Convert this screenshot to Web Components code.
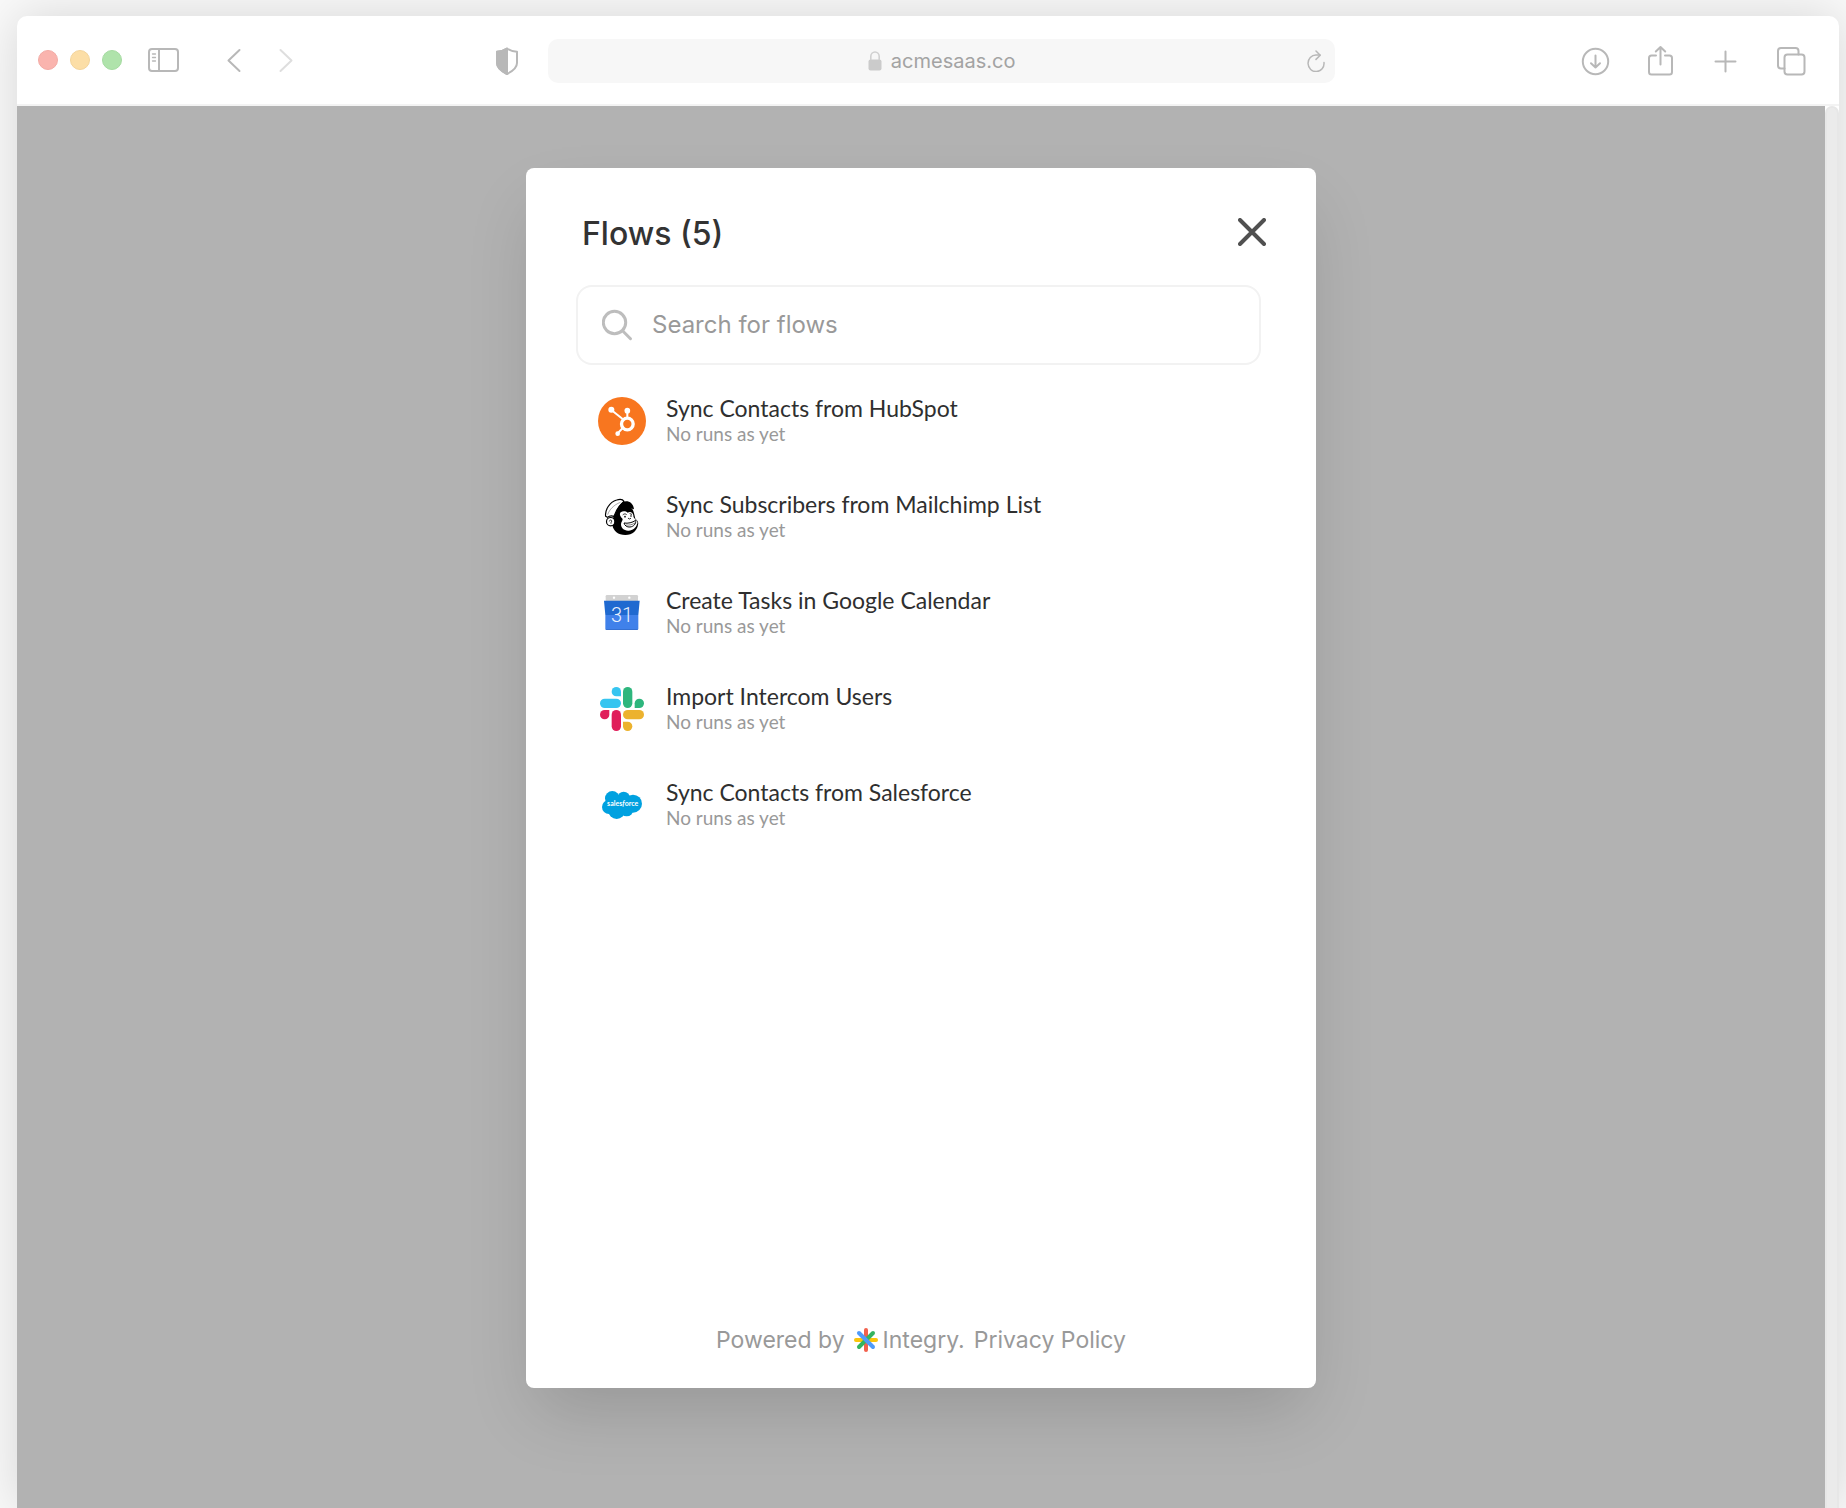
<!DOCTYPE html>
<html lang="en">
<head>
<meta charset="utf-8">
<meta name="viewport" content="width=device-width, initial-scale=1">
<title>Flows</title>
<style>
  html, body { margin: 0; }
  body { background: #f9f9f9; font-family: Inter, "Liberation Sans", sans-serif; color: #333; }
</style>
</head>
<body>
<browser-window>
  <browser-toolbar slot="toolbar" address="acmesaas.co"></browser-toolbar>
  <flows-dialog>
    <span slot="title">Flows (5)</span>
    <flow-search slot="search" placeholder="Search for flows"></flow-search>
    <flow-item brand="hubspot">Sync Contacts from HubSpot<span slot="status">No runs as yet</span></flow-item>
    <flow-item brand="mailchimp">Sync Subscribers from Mailchimp List<span slot="status">No runs as yet</span></flow-item>
    <flow-item brand="calendar">Create Tasks in Google Calendar<span slot="status">No runs as yet</span></flow-item>
    <flow-item brand="slack">Import Intercom Users<span slot="status">No runs as yet</span></flow-item>
    <flow-item brand="salesforce">Sync Contacts from Salesforce<span slot="status">No runs as yet</span></flow-item>
    <powered-by slot="footer"></powered-by>
  </flows-dialog>
</browser-window>

<script>
const RESET = `
  * { box-sizing: border-box; }
  button { appearance: none; border: 0; padding: 0; margin: 0; background: none; font: inherit; color: inherit; cursor: pointer; display: block; }
  svg { display: block; }
`;

class BaseElement extends HTMLElement {
  connectedCallback() {
    if (this.shadowRoot) return;
    this.attachShadow({ mode: 'open' }).innerHTML = `<style>${RESET}${this.styles()}</style>${this.markup()}`;
  }
}

customElements.define('browser-window', class extends BaseElement {
  styles() { return `
    :host { display: flex; flex-direction: column; min-height: 100vh; padding: 16px 7px 0 17px; box-sizing: border-box; overflow: hidden; }
    .frame { flex: 1; display: flex; flex-direction: column; background: #fff; border-radius: 10px 10px 0 0; box-shadow: 0 0 50px rgba(0,0,0,.14); }
    .view { flex: 1; display: flex; }
    .page { flex: 1; display: flex; justify-content: center; padding: 62px 24px 120px; background: #b2b2b2; }
    .scroll { width: 14px; background: #ebebeb; border: 2px solid #e7e7e7; border-bottom: 0; border-radius: 7px 7px 0 0; }
  `; }
  markup() { return `
    <div class="frame">
      <slot name="toolbar"></slot>
      <div class="view"><main class="page"><slot></slot></main><div class="scroll"></div></div>
    </div>`; }
});

customElements.define('browser-toolbar', class extends BaseElement {
  styles() { return `
    :host { display: grid; grid-template-columns: 13fr minmax(0, 787px) 12fr; align-items: center; height: 90px; padding: 2px 32px 0 20px; border-bottom: 2px solid #f3f3f3; box-sizing: border-box; }
    .left, .dots, .right, .nav { display: flex; align-items: center; }
    .left { padding-bottom: 2px; }
    .dots { gap: 10px; margin-right: 25px; }
    .nav { gap: 20px; margin-left: 38px; }
    button.shield { margin-left: auto; margin-right: 25px; }
    .right { gap: 33px; justify-content: flex-end; }
    .bar { display: grid; grid-template-columns: 1fr auto 1fr; align-items: center; height: 44px; padding: 0 10px; border-radius: 10px; background: #f7f7f7; }
    label { grid-column: 2; display: flex; align-items: center; gap: 9px; }
    input { field-sizing: content; border: 0; padding: 0; margin: 0; outline: 0; background: none; font: 400 20px/28px Inter, "Liberation Sans", sans-serif; color: #a3a3a3; }
    .reload { justify-self: end; }
    .icon { fill: none; stroke: #b8b8b8; stroke-width: 2; stroke-linecap: round; stroke-linejoin: round; }
    .forward { stroke: #dedede; }
  `; }
  markup() {
    const dot = (label, fill, edge) => `<button aria-label="${label}"><svg width="22" height="22"><circle cx="11" cy="11" r="9.5" fill="${fill}" stroke="${edge}"/></svg></button>`;
    const icon = (label, body, cls = '') => `<button class="${cls}" aria-label="${label}"><svg class="icon ${cls}" width="32" height="32" viewBox="0 0 32 32">${body}</svg></button>`;
    return `
    <div class="left">
      <div class="dots">${dot('Close', '#fab4ae', '#f3aba5')}${dot('Minimize', '#fcdea6', '#f3d49b')}${dot('Zoom', '#afe3ab', '#a5dba1')}</div>
      ${icon('Sidebar', '<rect x="1" y="5" width="29" height="22" rx="3"/><path d="M11 5v22"/><path stroke-width="1.3" d="M4.5 10h3M4.5 13.5h3M4.5 17h3"/>')}
      <div class="nav">${icon('Back', '<path d="M21.500 6 10.500 16.500 21.500 27"/>')}${icon('Forward', '<path d="M10.500 6 21.500 16.500 10.500 27"/>', 'forward')}</div>
      ${icon('Privacy report', '<path d="M16 4.500c3 2 6 3 10 3.200V19c0 4.500-4 8-10 11C10 27 6 23.500 6 19V7.700C10 7.500 13 6.500 16 4.500z"/><path d="M16 4.500v25.500C10 27 6 23.500 6 19V7.700C10 7.500 13 6.500 16 4.500z" fill="#b8b8b8"/>', 'shield')}
    </div>
    <div class="bar">
      <label><svg width="14" height="20" viewBox="0 0 14 20" aria-label="Secure"><rect x="0.500" y="8.500" width="13" height="11" rx="2" fill="#cbcbcb"/><path d="M2.800 9V5.500a4.200 4.500 0 0 1 8.400 0V9" fill="none" stroke="#d0d0d0" stroke-width="1.600"/></svg>
      <input type="text" aria-label="Address" value="${this.getAttribute('address')}"></label>
      <button class="reload" aria-label="Reload"><svg class="icon" width="18" height="22" viewBox="0 0 18 22" style="stroke-width:1.500"><path d="M17 12.500A8 8.300 0 1 1 9 5h4"/><path d="M9 1l4.200 4.200L9 9.400"/></svg></button>
    </div>
    <div class="right">
      ${icon('Downloads', '<circle cx="15.500" cy="16.500" r="12.700"/><path d="M15.500 10.500v12M11 18.200l4.500 4.300 4.500-4.300"/>')}
      ${icon('Share', '<path d="M11 10.500H6.500a2.500 2.500 0 0 0-2.500 2.500v14a2.500 2.500 0 0 0 2.500 2.500h18a2.500 2.500 0 0 0 2.500-2.500v-14a2.500 2.500 0 0 0-2.500-2.500H20"/><path d="M15.500 19.500V2M10.800 6.500 15.500 2l4.700 4.500"/>')}
      ${icon('New tab', '<path d="M5.500 16.500h20M15.500 6.500v20"/>')}
      ${icon('Tabs', '<rect x="9.500" y="9.500" width="20" height="20" rx="3"/><path d="M9.500 23.500H6a3 3 0 0 1-3-3V6a3 3 0 0 1 3-3h14.500a3 3 0 0 1 3 3v3.500"/>')}
    </div>`;
  }
});

customElements.define('flows-dialog', class extends BaseElement {
  styles() { return `
    :host { display: flex; flex-direction: column; flex: 0 1 790px; min-width: 0; background: #fff; border-radius: 8px; box-shadow: 0 32px 64px -10px rgba(0,0,0,.15); box-sizing: border-box; }
    header { display: flex; align-items: center; justify-content: space-between; padding: 42px 50px 31px 56px; }
    h1 { margin: 0; padding-top: 4px; font-size: 32px; line-height: 40px; font-weight: 500; color: #333; }
    .search { padding: 0 55px 0 50px; }
    .list { flex: 1; display: flex; flex-direction: column; padding: 8px 55px 0 50px; }
    footer { padding: 32px 50px 33px; }
  `; }
  markup() { return `
    <header><h1><slot name="title"></slot></h1>
      <button aria-label="Close"><svg width="28" height="28" viewBox="0 0 28 28" fill="none" stroke="#505050" stroke-width="4" stroke-linecap="round"><path d="M2 2l24 24M26 2 2 26"/></svg></button></header>
    <div class="search"><slot name="search"></slot></div>
    <div class="list" role="list"><slot></slot></div>
    <footer><slot name="footer"></slot></footer>`; }
});

customElements.define('flow-search', class extends BaseElement {
  styles() { return `
    :host { display: block; }
    label { display: flex; align-items: center; gap: 18px; height: 80px; padding: 0 24px; border: 2px solid #f2f2f2; border-radius: 16px; }
    svg { flex: none; }
    input { flex: 1; min-width: 0; border: 0; padding: 0; outline: 0; background: none; font: 400 24px/32px Inter, "Liberation Sans", sans-serif; color: #333; }
    input::placeholder { color: #999; opacity: 1; }
  `; }
  markup() { return `
    <label><svg width="32" height="32" viewBox="0 0 32 32" fill="none" stroke="#bdbdbd" stroke-width="3" stroke-linecap="round"><circle cx="12.500" cy="13.500" r="11.200"/><path d="M20.800 22l7.700 7.700"/></svg>
    <input type="search" aria-label="${this.getAttribute('placeholder')}" placeholder="${this.getAttribute('placeholder')}"></label>`; }
});

const BRANDS = {
  hubspot: `<svg viewBox="54 51 144 144"><circle cx="126" cy="123" r="72" fill="#f8761f"/>
    <g fill="none" stroke="#fff"><circle cx="142" cy="132" r="17.500" stroke-width="10"/><path d="M94 90l34 27M142 94v20M128 144l-15 16" stroke-width="6"/></g>
    <g fill="#fff"><circle cx="94" cy="89" r="9"/><circle cx="142" cy="92" r="8.500"/><circle cx="113" cy="161" r="7"/></g></svg>`,
  mailchimp: `<svg viewBox="54 39 144 144">
    <path d="M102 94c8-10 30-20 46-14 8 4 12 10 14 20l4 16c8 6 10 12 8 18-2 16-16 31-38 31-22 0-36-12-39-30z" fill="#000"/>
    <path d="M77 109C74 92 88 66 110 60c10-3 19-1 22 4-9 8-18 17-23 29l-7 16c-8-3-15-1-20 3z" fill="#fff" stroke="#000" stroke-width="3.500" stroke-linejoin="round"/>
    <path d="M83 104c5-15 18-29 38-37" fill="none" stroke="#000" stroke-width="1"/>
    <path d="M110 92C114 81 120 72 129 65c15-5 31 2 33 23-12-5-22-6-32-3-8 1-14 4-20 7z" fill="#000"/>
    <path d="M122 97c7-5 15-4 21 1 8-5 16 0 17 8 0 5 1 7 5 11 6 5 10 11 6 16-3 11-14 20-27 19-13 0-21-8-21-19 0-8 5-10 5-16-7-7-11-14-6-20z" fill="#fff"/>
    <circle cx="92" cy="125" r="12.500" fill="#fff" stroke="#000" stroke-width="3.500"/>
    <path d="M88 124c1-5 7-5 7-1 0 4-3 4-2 8" fill="none" stroke="#000" stroke-width="2.500"/>
    <path d="M129 104c3-3 7-3 10-1M150 101l5 2M145 115l4 2 3-2" fill="none" stroke="#000" stroke-width="2.500" stroke-linecap="round"/>
    <circle cx="135" cy="110" r="2.500"/><circle cx="153" cy="108" r="2.500"/>
    <path d="M132 129c12 2 25-1 35-8 2 10-6 19-17 20-9 1-16-4-18-12z" fill="#fff" stroke="#000" stroke-width="3" stroke-linejoin="round"/>
    <path d="M138 135c10 1 19-1 27-6" fill="none" stroke="#000" stroke-width="1.500"/></svg>`,
  calendar: `<svg viewBox="54 27 144 144">
    <path d="M77 49a4 4 0 0 1 4-4h89a4 4 0 0 1 4 4v18H77z" fill="#d2d2d2"/><circle cx="102" cy="53" r="3.500" fill="#fff"/><circle cx="148" cy="53" r="3.500" fill="#fff"/>
    <path d="M72 62h107l-4 43H76z" fill="#1f69d0"/><path d="M76 105h99v40a5 5 0 0 1-5 5H81a5 5 0 0 1-5-5z" fill="#4081ea"/><path d="M76 147h99a5 5 0 0 1-5 3H81a5 5 0 0 1-5-3z" fill="#3570d2"/>
    <text x="126" y="126" text-anchor="middle" font-family="Roboto, sans-serif" font-size="60" font-weight="300" fill="#eaf1fc">31</text></svg>`,
  slack: `<svg viewBox="54 45 144 144">
    <g fill="#36c5f0"><rect x="60" y="86" width="63" height="28" rx="14"/><path d="M123 79h-14a14 14 0 1 1 14-14z"/></g>
    <g fill="#2eb67d"><rect x="129" y="51" width="28" height="63" rx="14"/><path d="M164 114v-14a14 14 0 1 1 14 14z"/></g>
    <g fill="#ecb22e"><rect x="129" y="120" width="63" height="28" rx="14"/><path d="M129 155h14a14 14 0 1 1-14 14z"/></g>
    <g fill="#e01e5a"><rect x="95" y="120" width="28" height="63" rx="14"/><path d="M88 120v14a14 14 0 1 1-14-14z"/></g></svg>`,
  salesforce: `<svg viewBox="54 333 144 144"><g fill="#00a1e0"><circle cx="97" cy="385" r="22"/><circle cx="131" cy="384" r="19"/><circle cx="159" cy="401" r="27"/><circle cx="87" cy="411" r="21"/><circle cx="110" cy="422" r="25"/><circle cx="140" cy="419" r="20"/><path d="M88 390h62v30H88z"/></g>
    <text x="128" y="407" text-anchor="middle" font-family="Lato, sans-serif" font-size="21" font-weight="700" fill="#fff">sales<tspan font-style="italic">f</tspan>orce</text></svg>`
};

customElements.define('brand-icon', class extends BaseElement {
  styles() { return `:host { display: block; width: 48px; height: 48px; flex: none; } svg { width: 100%; height: 100%; }`; }
  markup() { return BRANDS[this.getAttribute('name')]; }
});

customElements.define('flow-item', class extends BaseElement {
  styles() { return `
    :host { display: block; }
    button { display: flex; align-items: center; gap: 20px; width: 100%; height: 96px; padding: 0 22px; text-align: left; font-family: Lato, "Liberation Sans", sans-serif; }
    .text { display: flex; flex-direction: column; min-width: 0; padding-bottom: 2px; }
    .name { font-size: 23px; line-height: 28px; color: #2f2f2f; }
    .status { font-size: 19px; line-height: 24px; color: #999; }
  `; }
  markup() { return `
    <button><brand-icon name="${this.getAttribute('brand')}"></brand-icon>
    <span class="text"><span class="name"><slot></slot></span><span class="status"><slot name="status"></slot></span></span></button>`; }
  connectedCallback() { this.setAttribute('role', 'listitem'); super.connectedCallback(); }
});

customElements.define('powered-by', class extends BaseElement {
  styles() { return `
    :host { display: flex; justify-content: center; align-items: center; font-size: 23px; line-height: 30px; color: #999; }
    a { color: inherit; text-decoration: none; }
    .brand { display: flex; align-items: center; gap: 5px; margin: 0 9px; }
  `; }
  markup() { return `
    <span>Powered by</span>
    <a class="brand" href="#integry"><svg width="24" height="24" viewBox="0 0 24 24" fill="none" stroke-width="4" stroke-linecap="round"><path d="M2 12h20" stroke="#fbc50c"/><path d="M12 2v20" stroke="#f2604c"/><path d="M19 5 5 19" stroke="#35b35f"/><path d="M5 5l14 14" stroke="#4f9bfa"/></svg><span>Integry.</span></a>
    <a href="#privacy">Privacy Policy</a>`; }
});
</script>
</body>
</html>
